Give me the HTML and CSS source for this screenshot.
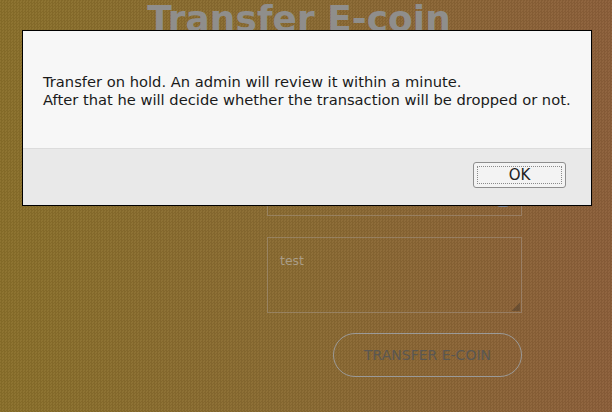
FILE: index.html
```html
<!DOCTYPE html>
<html>
<head>
<meta charset="utf-8">
<link rel="stylesheet" href="styles.css">
</head>
<body>
<div class="page">
  <h1 class="title">Transfer E-coin</h1>
  <form class="form">
    <div class="field field-select"><span class="knob"></span></div>
    <div class="field field-area"><span class="placeholder">test</span><span class="grip"></span></div>
    <div class="actions"><button type="button" class="submit">TRANSFER E-COIN</button></div>
  </form>
</div>
<div class="dialog">
  <div class="dialog-body">
    <p class="msg">Transfer on hold. An admin will review it within a minute.<br>After that he will decide whether the transaction will be dropped or not.</p>
  </div>
  <div class="dialog-foot">
    <button type="button" class="ok"><span class="ok-ring">OK</span></button>
  </div>
</div>
</body>
</html>
```

FILE: styles.css
```css
html, body {
  margin: 0;
  height: 100%;
}
body {
  font-family: "DejaVu Sans", sans-serif;
  background-color: #8b672f;
  background-image:
    repeating-conic-gradient(rgba(0,0,0,0.05) 0 25%, rgba(255,255,255,0.03) 0 50%),
    linear-gradient(to right, #8a702a, #8a6a32 50%, #8c5f3a);
  background-size: 3px 3px, 100% 100%;
  overflow: hidden;
}
.page {
  display: flex;
  flex-direction: column;
}
.title {
  margin: 0;
  padding-right: 14px;
  text-align: center;
  font-size: 36px;
  line-height: 38px;
  font-weight: bold;
  color: #8f8e8c;
}
.form {
  margin: 137px 0 0 267px;
  width: 255px;
  display: flex;
  flex-direction: column;
  gap: 21px;
}
.field {
  box-sizing: border-box;
  border: 1px solid rgba(170,160,150,0.45);
  position: relative;
}
.field-select {
  height: 41px;
}
.knob {
  position: absolute;
  right: 12px;
  bottom: 8px;
  width: 12px;
  height: 3px;
  border-radius: 0 0 3px 3px;
  background: #7d8694;
}
.field-area {
  height: 76px;
  padding: 12px 12px;
}
.placeholder {
  font-size: 12.5px;
  color: #a99c86;
}
.grip {
  position: absolute;
  right: 1px;
  bottom: 1px;
  width: 9px;
  height: 9px;
  background: linear-gradient(135deg, transparent 50%, rgba(60,50,40,0.4) 50%);
}
.actions {
  display: flex;
  justify-content: flex-end;
  margin-top: -1px;
}
.submit {
  width: 189px;
  height: 44px;
  border: 1px solid #9b9a98;
  border-radius: 22px;
  background: transparent;
  font-family: "DejaVu Sans", sans-serif;
  font-size: 14px;
  color: #5a5752;
  padding: 0;
}
.dialog {
  position: absolute;
  left: 22px;
  top: 30px;
  width: 568px;
  border: 1px solid #000;
  background: #f7f7f7;
  display: flex;
  flex-direction: column;
}
.dialog-body {
  height: 118px;
  box-sizing: border-box;
  padding: 42px 20px 0 20px;
  border-bottom: 1px solid #dcdcdc;
}
.msg {
  margin: 0;
  font-size: 14.7px;
  line-height: 18px;
  color: #1a1a1a;
}
.dialog-foot {
  height: 56px;
  background: #e9e9e9;
  display: flex;
  justify-content: flex-end;
  align-items: flex-start;
  padding: 13px 25px 0 0;
  box-sizing: border-box;
}
.ok {
  width: 93px;
  height: 26px;
  box-sizing: border-box;
  border: 1px solid #8e8e8e;
  border-radius: 3px;
  background: #f3f3f3;
  padding: 3px;
  display: flex;
}
.ok-ring {
  flex: 1;
  border: 1px dotted #8a8a8a;
  font-family: "DejaVu Sans", sans-serif;
  font-size: 15px;
  line-height: 16px;
  color: #222;
  text-align: center;
}
```
